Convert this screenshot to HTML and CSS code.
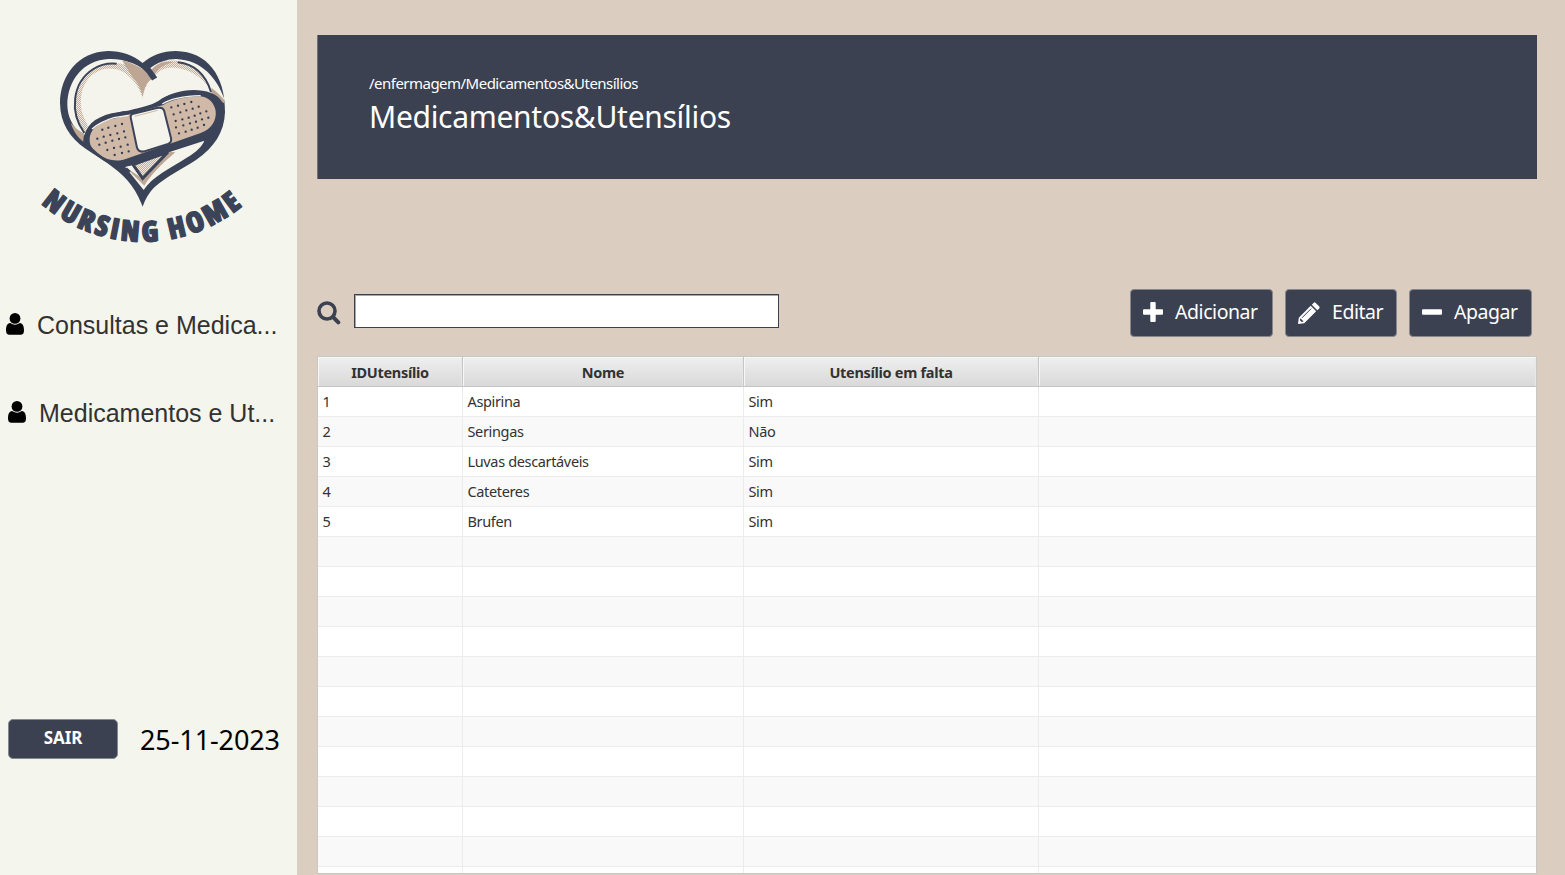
FILE: index.html
```html
<!DOCTYPE html>
<html lang="pt">
<head>
<meta charset="utf-8">
<title>Medicamentos&amp;Utensílios</title>
<link rel="stylesheet" href="styles.css">
</head>
<body>
<div class="app">
  <aside class="sidebar">
    <svg class="logo" viewBox="0 0 675 645" role="img" aria-label="Nursing Home">
      <defs>
        <pattern id="grain" width="6" height="6" patternUnits="userSpaceOnUse"><rect width="6" height="6" fill="#efe9df"/><path d="M0 0h3v3H0zM3 3h3v3H3z" fill="#c3af9e"/></pattern>
        <path id="arc" d="M33 506A467 467 0 0 0 645 506"/>
      </defs>
      <path class="ink" d="M338 84C310 60 274 48 234 48C145 50 90 122 90 205C91 264 119 309 167 341C229 382 274 408 305 452C321 474 331 497 338 515C346 493 356 474 374 456C409 424 456 402 499 374C552 338 583 292 585 232C586 120 531 50 438 48C398 48 366 60 338 84Z"/>
      <path class="cream" d="M366 128C350 108 330 94 308 85C284 75 259 71 236 72C160 75 112 136 112 211C113 244 126 276 160 303L176 289C190 254 235 237 285 228C320 226 350 215 385 203C400 180 450 163 548 178C566 185 578 193 585 197C562 130 516 75 438 72C411 72 382 82 358 101Z"/>
      <path d="M122 263C131 290 143 307 160 320L162 296C145 286 133 276 122 263Z" fill="#bda794"/>
      <path d="M544 158C561 170 577 185 586 201L580 204C566 192 553 184 544 181Z" fill="#bda794"/>
      <path d="M147 270C117 200 150 120 211 91C245 78 293 82 327 112L366 130C350 144 342 166 338 190C328 154 304 123 274 108C220 84 163 121 154 181C149 217 156 240 174 272L164 292Z" fill="url(#grain)"/>
      <path d="M276 76C322 88 349 107 367 130C347 144 342 163 338 184C332 157 319 140 306 124Z" fill="#bda794"/>
      <path d="M361 109C383 82 411 72 443 78C489 83 522 115 543 164C519 128 480 103 437 98C404 95 382 110 368 130Z" fill="url(#grain)"/>
      <path d="M361 108C378 86 400 76 432 82C403 88 386 99 373 120Z" fill="#bda794"/>
      <path class="line" d="M163 294C118 232 126 143 190 102C213 87 237 84 260 86"/>
      <path class="line" d="M443 82C496 88 527 119 543 171"/>
      <path class="line thick" d="M337 88Q358 106 374 132"/>
      <path class="cream" d="M285 395L341 465C365 426 420 400 470 368C499 351 516 334 523 317L428 348L337 380Z"/>
      <path d="M286 397L343 452C362 420 392 390 436 352L414 350L337 430Z" fill="#bda794"/>
      <path class="line" d="M289 400L300 410"/>
      <path d="M309 389L338 430L414 351Z" fill="url(#grain)" stroke="#3b4358" stroke-width="9"/>
      <path class="ink" d="M161 317C163 275 192 248 245 235L295 227C339 215 357 214 385 198C425 169 492 155 543 174C573 184 588 211 580 243C575 280 550 305 511 319L422 348L308 390C269 404 232 390 194 356C172 343 160 332 161 317Z"/>
      <path d="M179 316C178 281 211 259 248 252L400 210C424 195 466 184 510 184C537 186 554 206 557 228C560 256 545 282 512 294L418 327L328 358L287 372C258 382 230 376 208 358C190 343 179 335 179 316Z" fill="#d0baa7"/>
      <path d="M186 282Q207 262 252 248L295 241M397 207Q433 184 512 182" fill="none" stroke="#f5f4ec" stroke-width="4"/>
      <path d="M302 247Q301 239 310 236L380 219Q398 215 402 226L423 309Q426 322 414 327L343 349Q326 353 321 338Z" fill="#f5f4ec" stroke="#3b4358" stroke-width="6"/>
      <path d="M314 244L383 226" stroke="#cfbba9" stroke-width="3"/>
      <g class="dots">
        <path d="M217 284h0M235 278h0M256 273h0M276 267h0M202 311h0M221 305h0M241 300h0M262 295h0M282 289h0M208 329h0M227 323h0M247 317h0M267 312h0M286 307h0M232 345h0M252 339h0M272 335h0M293 329h0M254 360h0M276 354h0M296 349h0"/>
        <path d="M424 217h0M444 212h0M463 207h0M484 201h0M431 238h0M451 232h0M469 226h0M488 221h0M506 215h0M437 258h0M457 253h0M476 248h0M494 242h0M511 235h0M529 229h0M438 277h0M460 271h0M480 265h0M498 260h0M516 253h0M535 248h0M447 295h0M467 290h0M485 284h0M503 278h0M522 270h0"/>
      </g>
      <text class="logo-text"><textPath href="#arc" textLength="657" lengthAdjust="spacing">NURSING HOME</textPath></text>
    </svg>
    <nav class="menu">
      <a class="menu-item"><svg class="user" viewBox="0 0 18 22"><circle cx="9" cy="5.4" r="5.4"/><path d="M4.2 10Q9 13.400 13.800 10C17 10.300 18 13.500 18 17.500Q18 21.700 14.500 21.700H3.500Q0 21.700 0 17.500C0 13.500 1 10.300 4.200 10Z"/></svg><span>Consultas e Medica...</span></a>
      <a class="menu-item second"><svg class="user" viewBox="0 0 18 22"><circle cx="9" cy="5.4" r="5.4"/><path d="M4.2 10Q9 13.400 13.800 10C17 10.300 18 13.500 18 17.500Q18 21.700 14.500 21.700H3.500Q0 21.700 0 17.500C0 13.500 1 10.300 4.200 10Z"/></svg><span>Medicamentos e Ut...</span></a>
    </nav>
    <div class="foot"><button class="exit">SAIR</button><span class="date">25-11-2023</span></div>
  </aside>
  <main class="main">
    <header class="banner">
      <div class="crumb"><span>/enfermagem/Medicamentos&amp;Utensílios</span></div>
      <h1 class="title"><span>Medicamentos&amp;Utensílios</span></h1>
    </header>
    <div class="toolbar">
      <svg class="search" viewBox="0 0 24 24"><circle cx="10" cy="10" r="8" fill="none" stroke="#3b4151" stroke-width="3.600"/><path d="M16 16L21.300 21.300" stroke="#3b4151" stroke-width="4" stroke-linecap="round"/></svg>
      <input class="field" type="text" aria-label="Pesquisar">
      <div class="actions">
        <button class="btn add"><svg viewBox="0 0 20 20"><path d="M8.300 0h3.400q1 0 1 1v6.300H19q1 0 1 1v3.400q0 1-1 1h-6.300V19q0 1-1 1H8.300q-1 0-1-1v-6.300H1q-1 0-1-1V8.300q0-1 1-1h6.300V1q0-1 1-1z"/></svg><span>Adicionar</span></button>
        <button class="btn edit"><svg viewBox="0 0 22 22"><path d="M12.700 3.800L18.200 9.300L6.200 21.200L0 22L.8 15.700Z"/><path d="M13.800 2.700L15.800.7Q16.700 0 17.500.7L21.300 4.500Q22 5.300 21.300 6.200L19.300 8.200Z"/><path d="M4 15.800L13.200 6.600" stroke="#3b4151" stroke-width="1"/><path d="M2.400 16.300L5.700 19.600L3.700 20.100L1.900 18.300Z" fill="#3b4151"/></svg><span>Editar</span></button>
        <button class="btn del"><svg viewBox="0 0 20 20"><rect y="7.300" width="20" height="5.400" rx="1"/></svg><span>Apagar</span></button>
      </div>
    </div>
    <div class="table">
      <div class="row head"><div>IDUtensílio</div><div>Nome</div><div>Utensílio em falta</div><div></div></div>
      <div class="row"><div>1</div><div>Aspirina</div><div>Sim</div><div></div></div>
      <div class="row"><div>2</div><div>Seringas</div><div>Não</div><div></div></div>
      <div class="row"><div>3</div><div>Luvas descartáveis</div><div>Sim</div><div></div></div>
      <div class="row"><div>4</div><div>Cateteres</div><div>Sim</div><div></div></div>
      <div class="row"><div>5</div><div>Brufen</div><div>Sim</div><div></div></div>
      <div class="row"><div></div><div></div><div></div><div></div></div>
      <div class="row"><div></div><div></div><div></div><div></div></div>
      <div class="row"><div></div><div></div><div></div><div></div></div>
      <div class="row"><div></div><div></div><div></div><div></div></div>
      <div class="row"><div></div><div></div><div></div><div></div></div>
      <div class="row"><div></div><div></div><div></div><div></div></div>
      <div class="row"><div></div><div></div><div></div><div></div></div>
      <div class="row"><div></div><div></div><div></div><div></div></div>
      <div class="row"><div></div><div></div><div></div><div></div></div>
      <div class="row"><div></div><div></div><div></div><div></div></div>
      <div class="row"><div></div><div></div><div></div><div></div></div>
      <div class="row"><div></div><div></div><div></div><div></div></div>
    </div>
  </main>
</div>
</body>
</html>
```
FILE: styles.css
```css
* { box-sizing: border-box; }
body { margin: 0; font-family: "Noto Sans", "Open Sans", sans-serif; color: #323232; }
button { font-family: inherit; margin: 0; }
.app { display: flex; width: 1565px; height: 875px; overflow: hidden; background: #dbcdc0; }

.sidebar { width: 297px; height: 875px; flex: none; background: #f4f5ec; display: flex; flex-direction: column; }
.logo { display: block; width: 225px; height: 215px; margin: 35px 0 0 30px; flex: none; overflow: visible; }
.ink { fill: #3b4358; }
.cream { fill: #f5f4ec; }
.line { fill: none; stroke: #3b4358; stroke-width: 6; }
.thick { stroke-width: 18; }
.dots { fill: none; stroke: #343c52; stroke-width: 7; stroke-linecap: round; }
.logo-text { font: 800 86px "Open Sans", sans-serif; font-stretch: 75%; fill: #3b4358; stroke: #3b4358; stroke-width: 4; stroke-linejoin: round; }
.menu { display: flex; flex-direction: column; padding: 53px 0 0 6px; gap: 44px; }
.menu-item { display: flex; align-items: center; gap: 13px; height: 44px; font: 25px/44px "Liberation Sans", sans-serif; white-space: nowrap; }
.menu-item.second { padding-left: 2px; }
.user { width: 18px; height: 22px; fill: #000; flex: none; margin-top: -3px; }
.foot { display: flex; align-items: center; margin-top: auto; padding: 0 0 115px 8px; gap: 22px; }
.exit { width: 110px; height: 40px; background: #3b4151; border: 1px solid #858891; border-radius: 5px; color: #fff; font-size: 17px; font-weight: 700; letter-spacing: -.1px; line-height: 34px; padding: 0 0 3px; }
.date { color: #000; font-size: 27px; line-height: 40px; white-space: nowrap; letter-spacing: -.1px; padding-top: 2px; }

.main { flex: 1; padding: 35px 28px 0 20px; display: flex; flex-direction: column; }
.banner { height: 144px; flex: none; background: #3b4151; border-left: 1px solid #70737e; padding: 36px 0 0 51px; color: #fff; }
.crumb { font-size: 15px; line-height: 24px; letter-spacing: -.52px; }
.title { margin: 0; font-size: 30px; font-weight: 400; line-height: 44px; letter-spacing: -.3px; }
.toolbar { display: flex; align-items: center; height: 48px; margin: 110px 5px 19px 0; flex: none; }
.search { width: 24px; height: 24px; margin-right: 13px; flex: none; }
.field { width: 425px; height: 34px; margin-top: -4px; border: 1px solid #3b4151; background: #fff; padding: 0 8px; outline: 0; box-shadow: inset 1px 1px 0 #a5a7ae; }
.actions { display: flex; gap: 12px; margin-left: auto; }
.btn { display: flex; align-items: center; height: 48px; padding: 0 0 0 12px; background: #3b4151; border: 1px solid #858891; border-radius: 4px; color: #fff; font-size: 19.500px; font-weight: 400; line-height: 44px; letter-spacing: -.45px; }
.btn svg { width: 20px; height: 20px; fill: #fff; flex: none; margin: -2px 12px 0 0; }
.btn span { margin-top: -2px; }
.btn.add { width: 143px; }
.btn.edit { width: 112px; }
.btn.del { width: 123px; }
.btn.edit svg { width: 22px; height: 22px; margin-top: 0; }

.table { height: 518px; flex: none; border: 1px solid #c8c8c8; background: #fff; overflow: hidden; }
.row { display: grid; grid-template: 30px / 145px 281px 295px 1fr; height: 30px; }
.row > div { border-right: 1px solid #ececec; border-bottom: 1px solid #ececec; padding: 0 4.500px; font-size: 14.500px; line-height: 29px; letter-spacing: -.35px; white-space: nowrap; }
.row > div:last-child { border-right: 0; }
.row:nth-child(odd) > div { background: #f9f9f9; }
.row.head > div { background: linear-gradient(#efefef, #d9d9d9); border-color: #c5c5c5; box-shadow: inset 1px 1px 0 #f7f7f7, inset -1px 0 0 #e8e8e8; font-weight: 700; text-align: center; line-height: 31px; font-size: 14.500px; letter-spacing: -.3px; }
```
